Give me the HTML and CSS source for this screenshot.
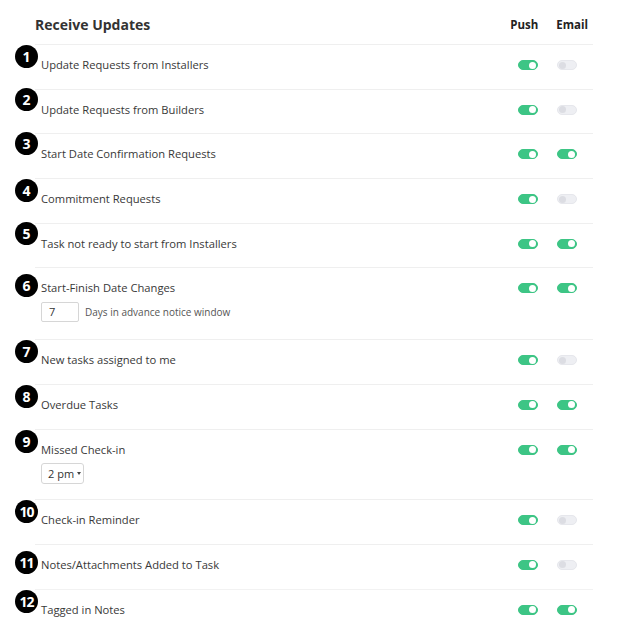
FILE: index.html
```html
<!DOCTYPE html>
<html>
<head>
<meta charset="utf-8">
<link rel="stylesheet" href="styles.css">
</head>
<body>
<div class="panel">
  <div class="head">
    <div class="title">Receive Updates</div>
    <div class="cols"><span>Push</span><span>Email</span></div>
  </div>

  <div class="row"><span class="badge">1</span>
    <div class="main"><div class="label">Update Requests from Installers</div></div>
    <div class="toggles"><span class="tg on"></span><span class="tg"></span></div>
  </div>
  <div class="row"><span class="badge up">2</span>
    <div class="main"><div class="label">Update Requests from Builders</div></div>
    <div class="toggles"><span class="tg on"></span><span class="tg"></span></div>
  </div>
  <div class="row"><span class="badge up">3</span>
    <div class="main"><div class="label">Start Date Confirmation Requests</div></div>
    <div class="toggles"><span class="tg on"></span><span class="tg on"></span></div>
  </div>
  <div class="row"><span class="badge">4</span>
    <div class="main"><div class="label">Commitment Requests</div></div>
    <div class="toggles"><span class="tg on"></span><span class="tg"></span></div>
  </div>
  <div class="row"><span class="badge up">5</span>
    <div class="main"><div class="label">Task not ready to start from Installers</div></div>
    <div class="toggles"><span class="tg on"></span><span class="tg on"></span></div>
  </div>
  <div class="row"><span class="badge low">6</span>
    <div class="main">
      <div class="label">Start-Finish Date Changes</div>
      <div class="extra"><span class="field">7</span><span class="hint">Days in advance notice window</span></div>
    </div>
    <div class="toggles"><span class="tg on"></span><span class="tg on"></span></div>
  </div>
  <div class="row"><span class="badge">7</span>
    <div class="main"><div class="label">New tasks assigned to me</div></div>
    <div class="toggles"><span class="tg on"></span><span class="tg"></span></div>
  </div>
  <div class="row"><span class="badge">8</span>
    <div class="main"><div class="label">Overdue Tasks</div></div>
    <div class="toggles"><span class="tg on"></span><span class="tg on"></span></div>
  </div>
  <div class="row"><span class="badge">9</span>
    <div class="main">
      <div class="label">Missed Check-in</div>
      <div class="extra short"><span class="select">2 pm<span class="caret"></span></span></div>
    </div>
    <div class="toggles"><span class="tg on"></span><span class="tg on"></span></div>
  </div>
  <div class="row"><span class="badge two">10</span>
    <div class="main"><div class="label">Check-in Reminder</div></div>
    <div class="toggles"><span class="tg on"></span><span class="tg"></span></div>
  </div>
  <div class="row"><span class="badge two low">11</span>
    <div class="main"><div class="label">Notes/Attachments Added to Task</div></div>
    <div class="toggles"><span class="tg on"></span><span class="tg"></span></div>
  </div>
  <div class="row last"><span class="badge two">12</span>
    <div class="main"><div class="label">Tagged in Notes</div></div>
    <div class="toggles"><span class="tg on"></span><span class="tg on"></span></div>
  </div>
</div>
</body>
</html>
```

FILE: styles.css
```css
* { box-sizing: border-box; }
html, body { margin: 0; padding: 0; background: #fff; }
body {
  font-family: "Open Sans", "Noto Sans", sans-serif;
  color: #333;
}
.panel {
  width: 593px;
  padding-left: 35px;
}
.head {
  height: 44px;
  display: flex;
  align-items: flex-start;
  justify-content: space-between;
}
.title {
  font-size: 14px;
  font-weight: 700;
  line-height: 20px;
  padding-top: 15px;
  color: #333;
}
.cols {
  display: flex;
  gap: 18px;
  padding-top: 17px;
  padding-right: 5px;
  font-size: 11.5px;
  font-weight: 700;
  line-height: 16px;
  color: #222;
}
.row {
  position: relative;
  display: flex;
  justify-content: space-between;
  align-items: flex-start;
  border-top: 1px solid #efefef;
  min-height: 44.7px;
}
.row.last { border-top-color: #f2f2f2; }
.main {
  padding: 12px 0 15.7px 6px;
}
.label {
  font-size: 11.2px;
  line-height: 16px;
  color: #383838;
}
.extra {
  display: flex;
  align-items: center;
  margin-top: 6px;
  margin-bottom: 1px;
}
.extra.short { margin-top: 5px; margin-bottom: 0; }
.field {
  width: 38px;
  height: 20px;
  border: 1px solid #d6d6d6;
  border-radius: 2px;
  font-size: 11px;
  line-height: 18px;
  padding-left: 7px;
  color: #333;
}
.hint {
  font-size: 10px;
  margin-left: 6px;
  color: #555;
}
.select {
  display: flex;
  align-items: center;
  height: 21px;
  width: 43px;
  border: 1px solid #d6d6d6;
  border-radius: 3px;
  font-size: 11px;
  padding-left: 6px;
  color: #333;
}
.caret {
  width: 0;
  height: 0;
  margin-left: 3px;
  border-left: 2.5px solid transparent;
  border-right: 2.5px solid transparent;
  border-top: 3px solid #444;
}
.toggles {
  display: flex;
  gap: 19px;
  padding-top: 15px;
  padding-right: 16px;
}
.tg {
  position: relative;
  display: block;
  width: 20px;
  height: 10px;
  border-radius: 5px;
  background: #eeeff3;
  border: 1px solid #e6e7ec;
}
.tg::after {
  content: "";
  position: absolute;
  top: 0.5px;
  left: 1px;
  width: 7px;
  height: 7px;
  border-radius: 50%;
  background: #dcdde3;
}
.tg.on {
  background: #3dc585;
  border-color: #3dc585;
}
.tg.on::after {
  left: auto;
  right: 1px;
  background: #fff;
}
.badge {
  position: absolute;
  left: -20px;
  top: 0;
  width: 23px;
  height: 23px;
  border-radius: 50%;
  background: #000;
  color: #fff;
  font-family: "Open Sans", sans-serif;
  font-weight: 700;
  font-size: 14px;
  line-height: 23px;
  text-align: center;
}
.badge.up { top: -2px; }
.badge.low { top: 6px; }
.badge.two { letter-spacing: -1px; font-size: 14px; }
```
